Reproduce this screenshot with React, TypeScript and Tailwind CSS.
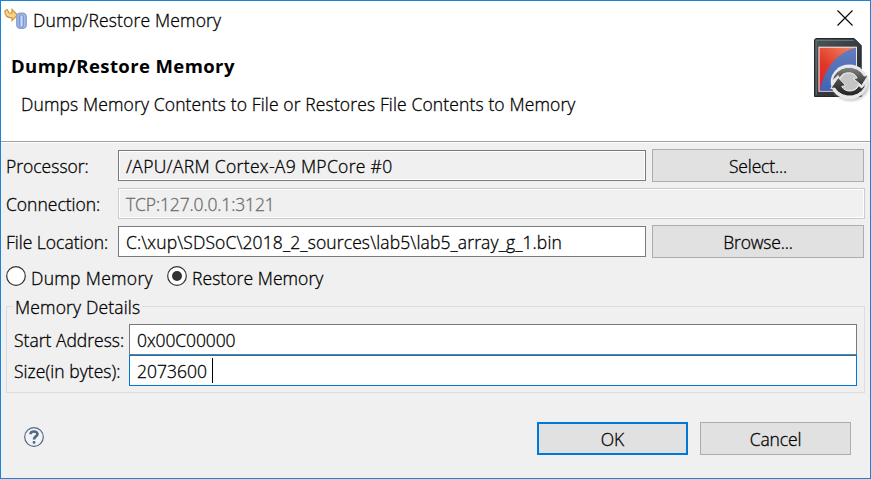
import React from "react";

const FONT = "font-['Open_Sans','Noto_Sans',sans-serif]";

function MemoryIcon() {
  return (
    <svg className="h-6 w-6 shrink-0" viewBox="0 0 24 24">
      <defs>
        <linearGradient id="cylinder" x1="0" x2="1">
          <stop offset="0" stopColor="#7590cf" />
          <stop offset="0.5" stopColor="#cbdcf6" />
          <stop offset="1" stopColor="#8ba5dd" />
        </linearGradient>
      </defs>
      <path d="M.8 3 L3.2 1.5 L5.2 5 L8 5.2 V1.5 L13.5 7 L8 12.5 V9.8 Q1 10 .8 3Z" fill="#f8d583" stroke="#c8964a" strokeWidth="1.2" />
      <rect x="12.8" y="5.3" width="9.4" height="15" rx="3.5" fill="#a9bfe8" stroke="#8b9fd2" strokeWidth="1.5" />
      <rect x="15.2" y="7" width="4.4" height="12" rx="1.8" fill="url(#cylinder)" stroke="#6f91cc" strokeWidth="0.8" />
    </svg>
  );
}

function CardIcon() {
  return (
    <svg className="h-[68px] w-[57px]" viewBox="-0.7 0 57 68">
      <defs>
        <linearGradient id="shell" x1="0" y1="0" x2="1" y2="1">
          <stop offset="0" stopColor="#4d565b" />
          <stop offset="1" stopColor="#20262a" />
        </linearGradient>
        <linearGradient id="red" x1="0" y1="1" x2="0.7" y2="0">
          <stop offset="0" stopColor="#ef1821" />
          <stop offset="0.5" stopColor="#df392a" />
          <stop offset="1" stopColor="#f17a56" />
        </linearGradient>
        <linearGradient id="blue" x1="0" y1="0" x2="0" y2="1">
          <stop offset="0" stopColor="#667dbd" />
          <stop offset="1" stopColor="#3c65b5" />
        </linearGradient>
        <linearGradient id="upper" x1="0" y1="0" x2="0" y2="1">
          <stop offset="0" stopColor="#858585" />
          <stop offset="1" stopColor="#303030" />
        </linearGradient>
        <linearGradient id="lower" x1="0" y1="0" x2="0" y2="1">
          <stop offset="0" stopColor="#555" />
          <stop offset="1" stopColor="#202020" />
        </linearGradient>
        <radialGradient id="shadow">
          <stop offset="0.75" stopColor="#888" stopOpacity="0.6" />
          <stop offset="1" stopColor="#aaa" stopOpacity="0" />
        </radialGradient>
      </defs>
      <path d="M2 .5 H40.500 L47.500 7.500 V58.500 H.8 V2Z" fill="url(#shell)" stroke="#21282c" />
      <path d="M2.500 57 V2.500 H40" fill="none" stroke="#697277" />
      <rect x="5.300" y="9.200" width="37.400" height="44" fill="url(#red)" stroke="#fff0ed" />
      <path d="M6 52.800 C10 33 22 14 42.300 9.700 V52.800Z" fill="url(#blue)" />
      <ellipse cx="37" cy="47" rx="20.500" ry="18" fill="url(#shadow)" />
      <ellipse cx="35.500" cy="44" rx="18.500" ry="17.500" fill="#e9e9e9" />
      <ellipse cx="35.500" cy="44" rx="9.500" ry="9" fill="#c5c5c5" stroke="#ddd" />
      <path d="M18.500 43 A17 16 0 0 1 50.500 38 L54.500 37.500 L48 47.500 L39.500 40.500 L43.500 40 A9.500 9 0 0 0 26 40.500 L24.500 37.500Z" fill="url(#upper)" stroke="#eaeaea" strokeWidth="1" />
      <path d="M52.500 45 A17 16 0 0 1 21 50 L17 50.500 L24.500 39.500 L32 47.500 L28 48.500 A9.500 9 0 0 0 45 47.500 L48 50Z" fill="url(#lower)" stroke="#eaeaea" strokeWidth="1" />
    </svg>
  );
}

function Caption({ children, className = "" }: { children: React.ReactNode; className?: string }) {
  return <span className={`whitespace-pre ${className}`}>{children}</span>;
}

function DialogButton({ children, className = "" }: { children: React.ReactNode; className?: string }) {
  return (
    <button className={`flex h-[33px] shrink-0 items-center justify-center bg-[#e1e1e1] pt-px ${className}`}>
      {children}
    </button>
  );
}

function Radio({ checked = false }: { checked?: boolean }) {
  return (
    <svg className="h-5 w-5 shrink-0" viewBox="0 0 20 20">
      <circle cx="10" cy="10" r="9.3" fill="#fff" stroke="#333" strokeWidth="1.2" />
      {checked && <circle cx="10" cy="10" r="5" fill="#333" />}
    </svg>
  );
}

export default function App() {
  return (
    <main className={`flex h-[479px] w-[871px] flex-col overflow-hidden border border-[#1883d7] bg-[#f0f0f0] text-[17.5px] font-light leading-6 text-black [-webkit-text-stroke:0.3px] ${FONT}`}>
      <header className="flex h-[140px] shrink-0 justify-between bg-white">
        <div className="flex flex-col">
          <div className="flex h-9 items-start pl-[3px] pt-[7px]">
            <MemoryIcon />
            <Caption className="pl-[5px] tracking-[0.17px]">Dump/Restore Memory</Caption>
          </div>
          <h1 className="h-[38px] pl-2.5 pt-[17px] text-[18.5px] font-bold tracking-[0.4px] [-webkit-text-stroke:0px]"><Caption>Dump/Restore Memory</Caption></h1>
          <p className="pl-5 pt-[17px] tracking-[0.13px]"><Caption>Dumps Memory Contents to File or Restores File Contents to Memory</Caption></p>
        </div>
        <div className="flex w-[57px] flex-col">
          <svg className="ml-6 mt-[9px] h-4 w-4" viewBox="0 0 16 16">
            <path d="M.5 .5 15.5 15.5M15.5 .5.5 15.5" stroke="#000" strokeWidth="1.1" />
          </svg>
          <div className="mt-3"><CardIcon /></div>
        </div>
      </header>
      <div className="h-0.5 shrink-0 border-b border-t border-b-white border-t-[#a0a0a0]" />

      <section className="flex shrink-0 flex-col gap-[5px] pl-[5px] pr-[5px] pt-[6px]">
        <div className="flex h-[33px] items-center pr-px">
          <Caption className="w-28 pt-px">Processor:</Caption>
          <div className="mr-1.5 flex h-[31px] w-[528px] items-center border border-[#7a7a7a] shadow-[inset_0_0_0_1px_white]"><Caption className="pl-[7px] pt-px tracking-[0.33px]">/APU/ARM Cortex-A9 MPCore #0</Caption></div>
          <DialogButton className="w-[212px] border border-[#adadad]"><Caption className="tracking-[-0.15px]">Select...</Caption></DialogButton>
        </div>
        <div className="flex h-[33px] items-center">
          <Caption className="w-28 pt-px">Connection:</Caption>
          <div className="flex h-[31px] flex-1 items-center border border-[#ccc] text-[#6d6d6d] shadow-[inset_0_0_0_1px_white]"><Caption className="pl-[7px] pt-px tracking-[-0.13px]">TCP:127.0.0.1:3121</Caption></div>
        </div>
        <div className="flex h-[33px] items-center pr-px">
          <Caption className="w-28 pt-px">File Location:</Caption>
          <div className="mr-1.5 flex h-[31px] w-[528px] items-center border border-[#7a7a7a] bg-white"><Caption className="pl-[7px] pt-px tracking-[0.12px]">C:\xup\SDSoC\2018_2_sources\lab5\lab5_array_g_1.bin</Caption></div>
          <DialogButton className="w-[212px] border border-[#adadad]"><Caption className="tracking-[-0.15px]">Browse...</Caption></DialogButton>
        </div>
      </section>

      <div className="flex h-12 shrink-0 items-start pl-[5px] pt-2">
        <Radio />
        <Caption className="w-[141px] pl-[5px] tracking-[0.32px]">Dump Memory</Caption>
        <Radio checked />
        <Caption className="pl-[5px] tracking-[0.06px]">Restore Memory</Caption>
      </div>

      <fieldset className="relative ml-[5px] mr-[5px] flex h-[87px] shrink-0 flex-col border border-[#dcdcdc] pl-[7px] pr-[7px] pt-[17px]">
        <span className="absolute -top-[12px] left-1.5 h-6 bg-[#f0f0f0] px-[2px] tracking-[0.16px]"><Caption>Memory Details</Caption></span>
        <div className="flex h-[31px] items-center">
          <Caption className="w-[115px] pt-px">Start Address:</Caption>
          <div className="flex h-[31px] flex-1 items-center border border-[#7a7a7a] bg-white"><Caption className="pl-[7px] pt-px tracking-[-0.1px]">0x00C00000</Caption></div>
        </div>
        <div className="flex h-[31px] items-center">
          <Caption className="w-[115px] pt-px tracking-[0.05px]">Size(in bytes):</Caption>
          <div className="flex h-[31px] flex-1 items-center border border-[#0078d7] bg-white">
            <Caption className="w-[82px] pl-[7px] pt-px">2073600</Caption>
            <span className="h-[25px] w-px bg-black" />
          </div>
        </div>
      </fieldset>

      <footer className="flex h-[62px] shrink-0 items-end pl-[23px]">
        <svg className="mb-2 h-5 w-5" viewBox="0 0 20 20">
          <circle cx="10" cy="10" r="9.3" fill="#f2f3f6" stroke="#526986" strokeWidth="1.2" />
          <path d="M6.5 7.2C6.7 3.5 13.8 3.6 13.4 7.4C13.2 9.5 10 9.5 10 12.5" fill="none" stroke="#526986" strokeWidth="2.7" />
          <rect x="8.7" y="14" width="2.7" height="2.7" rx="1" fill="#526986" />
        </svg>
        <DialogButton className="ml-[493px] w-[151px] border-2 border-[#0078d7]"><Caption>OK</Caption></DialogButton>
        <DialogButton className="ml-3 w-[151px] border border-[#adadad]"><Caption className="tracking-[-0.1px]">Cancel</Caption></DialogButton>
      </footer>
    </main>
  );
}
